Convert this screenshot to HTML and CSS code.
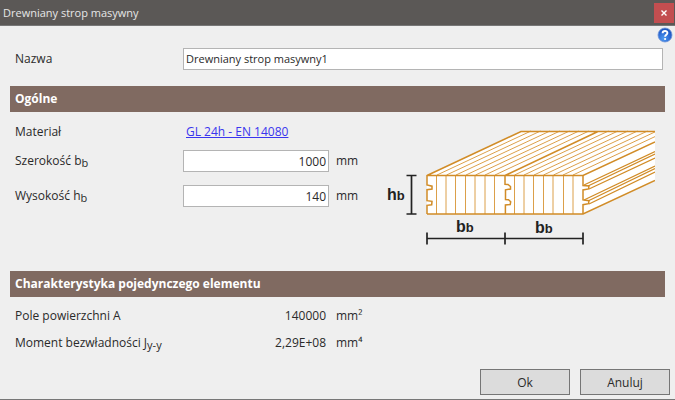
FILE: index.html
```html
<!DOCTYPE html>
<html lang="pl">
<head>
<meta charset="utf-8">
<title>Drewniany strop masywny</title>
<link rel="stylesheet" href="styles.css">
</head>
<body>
<form class="dialog">
  <header class="titlebar">
    <h1 class="title">Drewniany strop masywny</h1>
    <button class="close" type="button" aria-label="Zamknij">
      <svg width="6" height="6" viewBox="0 0 6 6"><path d="M.5 .5 5.5 5.5M5.5 .5 .5 5.5" stroke="#fff" stroke-width="1.4"/></svg>
    </button>
  </header>
  <main class="content">
    <button class="help" type="button" aria-label="Pomoc">
      <svg width="16" height="16" viewBox="0 0 16 16">
        <defs><radialGradient id="ball" cx=".4" cy=".75" r=".8"><stop offset="0" stop-color="#4f9af0"/><stop offset=".6" stop-color="#2a66d2"/><stop offset="1" stop-color="#174bb0"/></radialGradient></defs>
        <circle cx="8" cy="8" r="7" fill="url(#ball)" stroke="#6e94d8" stroke-width=".8"/>
        <path d="M5.6 6.2C5.7 3.2 10.5 3.3 10.4 6c0 1.8-2.3 1.8-2.3 3.8" fill="none" stroke="#fff" stroke-width="1.9"/>
        <circle cx="8.1" cy="12" r="1.1" fill="#fff"/>
      </svg>
    </button>
    <div class="name-row">
      <label for="name">Nazwa</label>
      <input class="field name" id="name" type="text" value="Drewniany strop masywny1">
    </div>
    <h2 class="band">Ogólne</h2>
    <section class="general">
      <div class="params">
        <div class="row row-link"><span>Materiał</span><a class="material" href="#">GL 24h - EN 14080</a></div>
        <div class="row"><label for="width">Szerokość b<sub>b</sub></label><input class="field number" id="width" type="text" value="1000"><span class="unit">mm</span></div>
        <div class="row"><label for="height">Wysokość h<sub>b</sub></label><input class="field number" id="height" type="text" value="140"><span class="unit">mm</span></div>
      </div>
      <svg class="diagram" width="270" height="120" viewBox="385 127 270 120" role="img" aria-label="Przekrój stropu">
        <path d="M427 175.500 521 131.500H655V180.500L583 214H427Z" fill="#fff"/>
        <g fill="none" stroke="#dca04a" stroke-width="1">
          <path d="M436.500 176v38M446 176v38M455.500 176v38M465.500 176v38M475 176v38M485 176v38M494.500 176v38M514.500 176v38M524 176v38M533.500 176v38M543.500 176v38M553 176v38M563.500 176v38M573 176v38"/>
          <path d="m437 175 94-44M446.500 175l94-44M456 175l94-44M466 175l94-44M475.500 175l94-44M485 175l94-44M495 175l94-44M514.500 175l94-44M524 175l94-44M534 175l94-44M543.500 175l94-44M553.500 175l94-44M563 175l94-44M573 175l94-44"/>
        </g>
        <g fill="none" stroke="#d18c27" stroke-width="1.500">
          <path d="M427 175.500 521 131.500H655M505 175.500l93-44M427 175.500H583L655 142M427 214H583L655 180.500"/>
          <path d="M427 175v10l5 1.200v2.800l-5 .7v11l5 .6-.3 3.500-4.700.5v8.700"/>
          <path d="M505 175v9.300l3 .2 2.500 2v2.500l-5 .8v9.700l3 .2 2.200 2-.5 2.800-4.800.5V214"/>
          <path d="M583 175v10.500l6 .4-.5 3-5.500 1v10l6 .8-.5 3-5.500 1V214"/>
          <path d="m584 185 71-33.500M588 186l67-32M589 189l66-31M584 200l71-34M588 201l67-32.500M589 204l66-32" stroke-width="1.300"/>
        </g>
        <path d="M406.500 175.500h10M411.500 175.500v38.500M406.500 214h10M427 238.500H583M427 232.500v12M505 232.500v12M583 232.500v12" fill="none" stroke="#222" stroke-width="1.700"/>
        <g class="dimension">
          <text x="387" y="200">h<tspan class="index">b</tspan></text>
          <text x="456" y="232">b<tspan class="index">b</tspan></text>
          <text x="535" y="233">b<tspan class="index">b</tspan></text>
        </g>
      </svg>
    </section>
    <h2 class="band">Charakterystyka pojedynczego elementu</h2>
    <section class="results">
      <div class="result"><span>Pole powierzchni A</span><output class="value">140000</output><span class="unit">mm²</span></div>
      <div class="result"><span>Moment bezwładności J<sub>y-y</sub></span><output class="value">2,29E+08</output><span class="unit">mm⁴</span></div>
    </section>
  </main>
  <footer class="actions">
    <button class="action" type="submit">Ok</button>
    <button class="action" type="button">Anuluj</button>
  </footer>
</form>
</body>
</html>
```

FILE: styles.css
```css
* { box-sizing: border-box; }

body {
  margin: 0;
  background: #efefef;
  color: #2a2a2a;
  font: 12px/16px "Open Sans", "Noto Sans", sans-serif;
}

button, input { font: inherit; color: inherit; }

.dialog {
  display: flex;
  flex-direction: column;
  min-height: 100vh;
  border-bottom: 1px solid #777;
}

.titlebar {
  display: flex;
  justify-content: space-between;
  align-items: center;
  height: 26px;
  padding: 1px 0 0 3px;
  border-bottom: 1px solid #777;
  background: #5b5856;
  color: #e6e6e6;
}

.title {
  margin: 0;
  font-size: 11px;
  font-weight: 400;
}

.close {
  display: flex;
  align-items: center;
  justify-content: center;
  width: 20px;
  height: 20px;
  margin-right: 1px;
  padding: 0;
  border: 0;
  background: #c34e50;
}

.content {
  position: relative;
  flex: 1;
  padding: 22px 10px 0;
}

.help {
  position: absolute;
  top: 1px;
  right: 2px;
  width: 16px;
  height: 16px;
  padding: 0;
  border: 0;
  background: none;
}

.help svg { display: block; }

.name-row {
  display: grid;
  grid-template-columns: 168px 1fr;
  align-items: center;
  padding: 0 2px 0 5px;
  margin-bottom: 16px;
}

.field {
  width: 100%;
  min-width: 0;
  height: 22px;
  padding: 0 2px;
  border: 1px solid #b4b4b4;
  background: #fff;
}

.name {
  padding-bottom: 2px;
  font-size: 11px;
}

.number { text-align: right; }

.band {
  margin: 0;
  padding: 5px;
  background: #806a61;
  color: #fff;
  font-size: 12px;
  font-weight: 700;
  line-height: 16px;
}

.general {
  display: flex;
  justify-content: space-between;
  height: 159px;
  padding-left: 5px;
}

.params { padding-top: 12px; }

.row {
  display: grid;
  grid-template-columns: 168px 146px auto;
  align-items: center;
  height: 22px;
  margin-bottom: 13px;
}

.row-link {
  height: 16px;
  margin-bottom: 10px;
}

.material {
  padding-left: 3px;
  color: #3a36ee;
}

.unit { padding-left: 7px; }

sub {
  font-size: 11px;
  line-height: 0;
  vertical-align: -2px;
}

.diagram {
  flex: none;
  margin: 15px 10px 0 0;
}

.dimension {
  fill: #222;
  font: bold 16px "Liberation Sans", sans-serif;
}

.index { font-size: 13px; }

.results {
  display: flex;
  flex-direction: column;
  gap: 11px;
  padding: 11px 5px 0;
}

.result {
  display: grid;
  grid-template-columns: 168px 146px auto;
}

.value {
  padding-right: 3px;
  text-align: right;
}

.actions {
  display: flex;
  justify-content: flex-end;
  gap: 10px;
  padding: 0 5px 4px;
}

.action {
  width: 90px;
  height: 26px;
  padding: 1px 0 0;
  border: 1px solid #767676;
  background: #dcdcdc;
}
```
